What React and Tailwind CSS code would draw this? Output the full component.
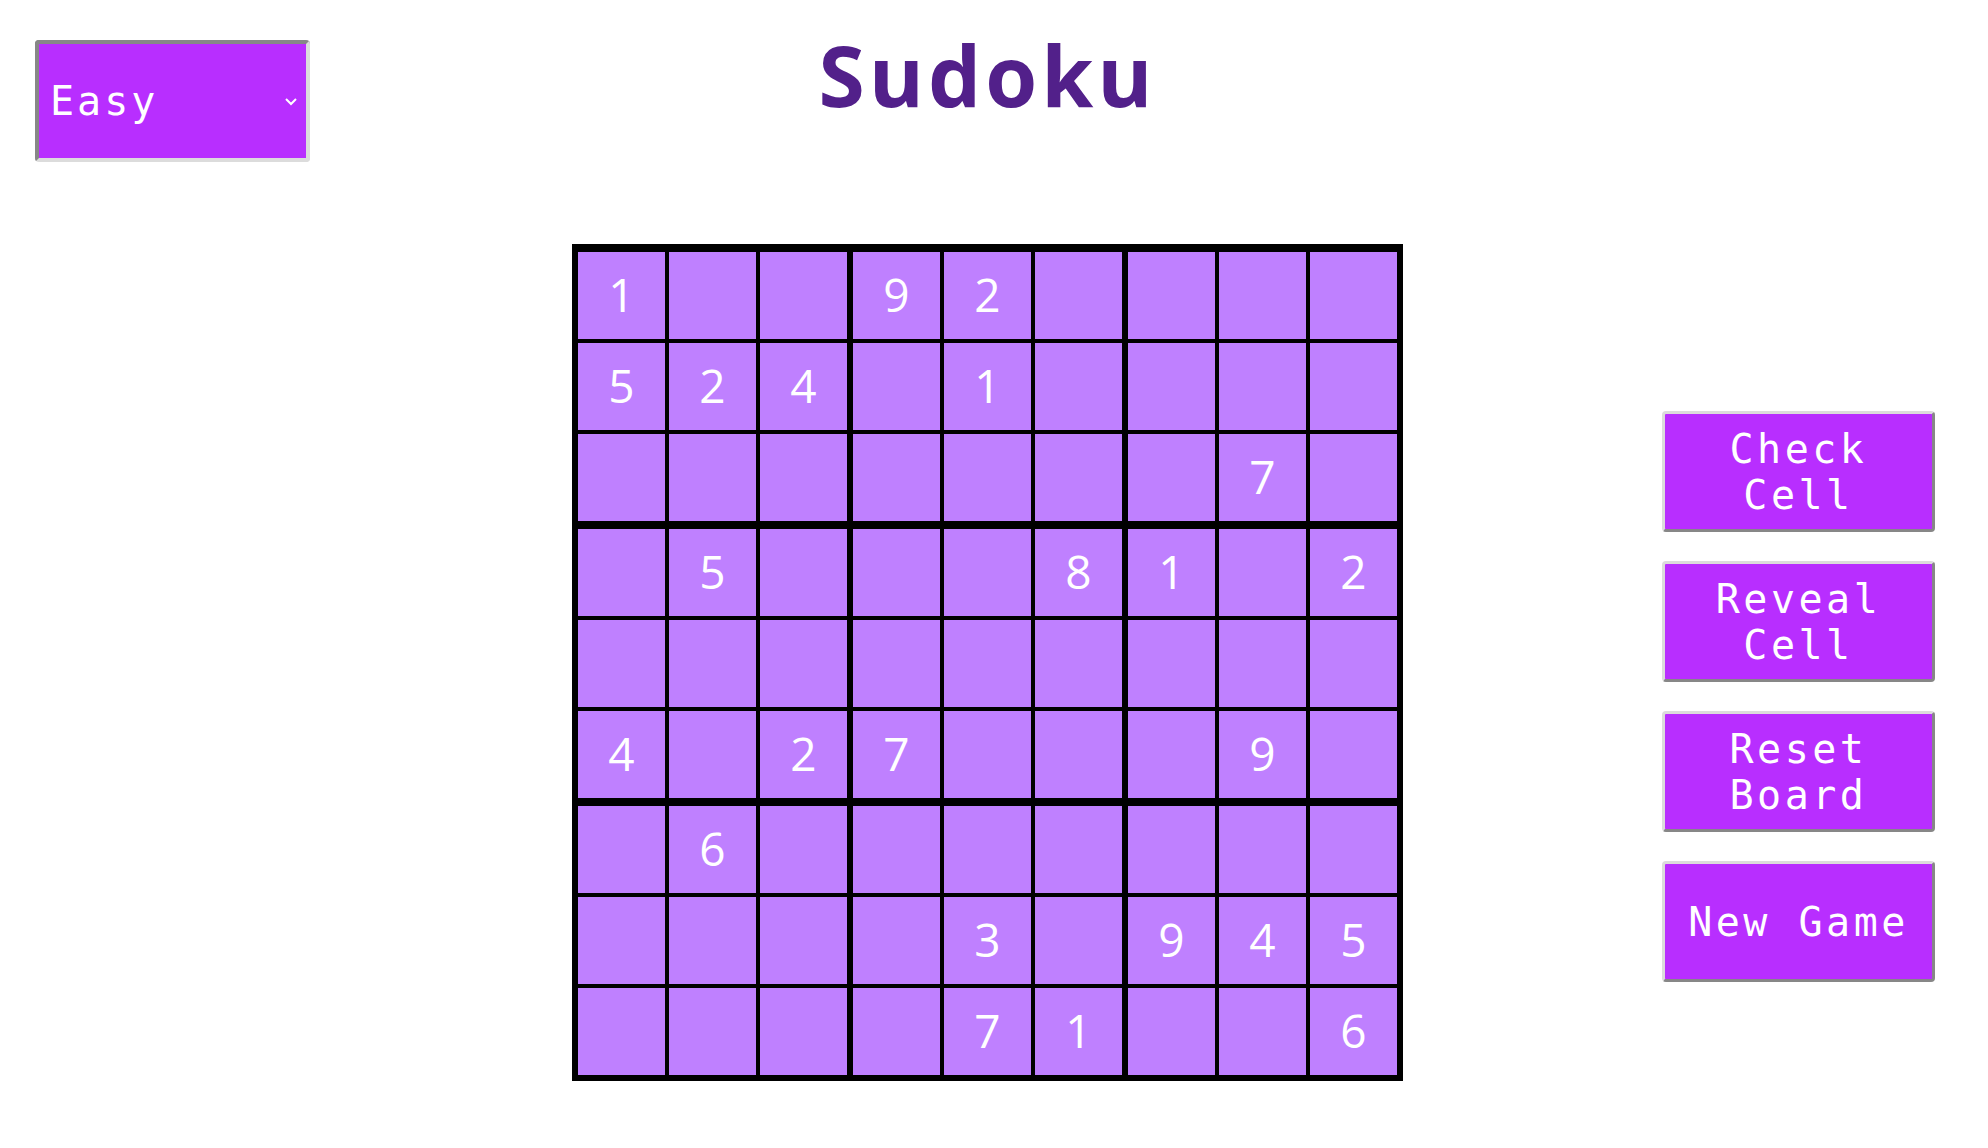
import React from "react";

const BOARD = [
  [1, 0, 0, 9, 2, 0, 0, 0, 0],
  [5, 2, 4, 0, 1, 0, 0, 0, 0],
  [0, 0, 0, 0, 0, 0, 0, 7, 0],
  [0, 5, 0, 0, 0, 8, 1, 0, 2],
  [0, 0, 0, 0, 0, 0, 0, 0, 0],
  [4, 0, 2, 7, 0, 0, 0, 9, 0],
  [0, 6, 0, 0, 0, 0, 0, 0, 0],
  [0, 0, 0, 0, 3, 0, 9, 4, 5],
  [0, 0, 0, 0, 7, 1, 0, 0, 6],
];

const BUTTONS = [
  ["Check", "Cell"],
  ["Reveal", "Cell"],
  ["Reset", "Board"],
  ["New Game"],
];

function Block({ br, bc }) {
  const cells = [];
  for (let r = 0; r < 3; r++) {
    for (let c = 0; c < 3; c++) {
      const v = BOARD[br * 3 + r][bc * 3 + c];
      cells.push(
        <div
          key={`${r}-${c}`}
          className="w-[87px] h-[87px] pb-[3px] bg-[#bf80ff] flex items-center justify-center text-white text-[46px] font-['Open_Sans',sans-serif]"
        >
          {v ? v : ""}
        </div>
      );
    }
  }
  return <div className="grid grid-cols-3 gap-[4px]">{cells}</div>;
}

export default function App() {
  return (
    <div className="w-[1988px] h-[1148px] bg-white flex">
      {/* difficulty */}
      <div className="w-[572px] pl-[35px] pt-[40px]">
        <div className="relative w-[275px] h-[122px]">
          <select
            defaultValue="Easy"
            className="appearance-none w-full h-full bg-[#b82eff] text-white text-[40px] tracking-[3px] pl-[11px] rounded-[4px] border-[4px] border-t-[#878787] border-l-[#878787] border-b-[#dcdcdc] border-r-[#dcdcdc] font-['DejaVu_Sans_Mono',monospace] outline-none"
          >
            <option>Easy</option>
            <option>Medium</option>
            <option>Hard</option>
          </select>
          <svg
            className="absolute right-[12px] top-[57px] pointer-events-none"
            width="14"
            height="9"
            viewBox="0 0 14 9"
          >
            <path d="M2 2 L7 7 L12 2" fill="none" stroke="white" strokeWidth="2" />
          </svg>
        </div>
      </div>

      {/* title + board */}
      <div className="w-[831px] flex flex-col items-center">
        <h1 className="mt-[33px] h-[84px] leading-none text-[84px] font-bold tracking-[4px] text-[#52208a] font-['Open_Sans',sans-serif]">
          Sudoku
        </h1>
        <div className="mt-[127px] bg-black pt-[8px] pb-[6px] px-[6px] grid grid-cols-3 gap-x-[6px] gap-y-[8px]">
          {[0, 1, 2].map((br) =>
            [0, 1, 2].map((bc) => <Block key={`${br}${bc}`} br={br} bc={bc} />)
          )}
        </div>
      </div>

      {/* actions */}
      <div className="pl-[259px] pt-[411px] flex flex-col gap-[29px]">
        {BUTTONS.map((lines) => (
          <button
            key={lines.join(" ")}
            className="w-[273px] h-[121px] bg-[#b82eff] text-white text-[40px] leading-[46px] tracking-[3.5px] rounded-[4px] border-[3px] border-t-[#dcdcdc] border-l-[#dcdcdc] border-b-[#878787] border-r-[#878787] font-['DejaVu_Sans_Mono',monospace] flex flex-col items-center justify-center"
          >
            {lines.map((l) => (
              <span key={l} className="whitespace-pre">
                {l}
              </span>
            ))}
          </button>
        ))}
      </div>
    </div>
  );
}
